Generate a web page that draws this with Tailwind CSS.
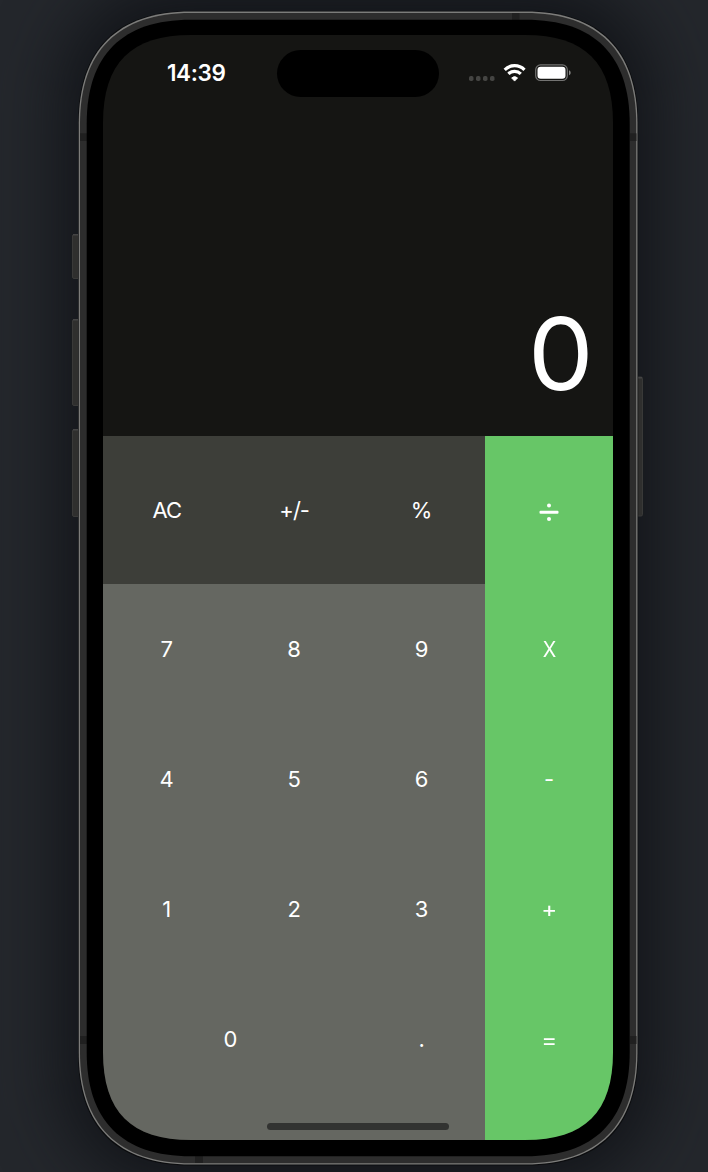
<!DOCTYPE html>
<html lang="en">
<head>
<meta charset="utf-8">
<title>Calculator</title>
<script src="https://cdn.jsdelivr.net/npm/@tailwindcss/browser@4"></script>
</head>
<body class="relative h-[1172px] w-[708px] overflow-hidden bg-[#24272c] font-['Inter',sans-serif] text-white">
  <!-- phone shadow -->
  <div class="absolute left-[62px] top-[-14px] h-[1200px] w-[592px] rounded-[110px] bg-[#101216]/90 blur-[34px]"></div>
  <!-- phone body -->
  <svg class="absolute inset-0" width="708" height="1172" viewBox="0 0 708 1172">
    <g fill="#2f2f2e" stroke="#393938" stroke-width="1">
      <rect x="72.5" y="234.5" width="10" height="44" rx="1.5"/>
      <rect x="72.5" y="319.5" width="10" height="86" rx="1.5"/>
      <rect x="72.5" y="429.5" width="10" height="87" rx="1.5"/>
      <rect x="634" y="377" width="8.5" height="139" rx="1.5"/>
    </g>
    <g fill="#444">
      <rect x="73" y="234" width="6" height="1.500"/><rect x="73" y="319" width="6" height="1.500"/>
      <rect x="73" y="429" width="6" height="1.500"/><rect x="637" y="377" width="5" height="1.500"/>
    </g>
    <path id="rim" fill="#0b0c0e"/>
    <path id="edge" fill="#7c7c7a"/>
    <path id="band" fill="#2d2d2d"/>
    <g fill="#202020">
      <rect x="512" y="13" width="7.500" height="7"/><rect x="195" y="1156" width="8" height="7"/>
      <rect x="80" y="133.300" width="7" height="7.700"/><rect x="630" y="133.300" width="6.500" height="7.700"/>
      <rect x="80" y="1036" width="7" height="8"/><rect x="630" y="1036" width="6.500" height="8"/>
    </g>
    <path id="bezel" fill="#000"/>
  </svg>
  <!-- screen -->
  <main id="screen" class="relative ml-[103px] mt-[35px] flex h-[1105px] w-[510px] flex-col bg-[#151513]">
    <header class="flex h-[77px] shrink-0 items-center pl-[64px] pr-[41px]">
      <time class="w-[110px] text-[22.5px] font-semibold leading-none tracking-[-0.4px]">14:39</time>
      <div class="-mt-px h-[47px] w-[162px] rounded-full bg-black"></div>
      <svg class="-mt-[3px] ml-auto" width="104" height="24" viewBox="0 0 104 24">
        <g fill="#454543"><rect x="1" y="16" width="4.500" height="5" rx="1.800"/><rect x="8" y="16" width="4.500" height="5" rx="1.800"/><rect x="15" y="16" width="4.500" height="5" rx="1.800"/><rect x="22" y="16" width="4.500" height="5" rx="1.800"/></g>
        <g fill="none" stroke="#fff" stroke-width="3.200">
          <path d="M36.700 9.800A14 14 0 0 1 56.500 9.800"/>
          <path d="M40.400 13.800A9 9 0 0 1 52.800 13.800"/>
        </g>
        <path d="M46.600 21.100L43.600 17.900A4.600 4.600 0 0 1 49.600 17.900Z" fill="#fff" stroke="#fff" stroke-width=".8" stroke-linejoin="round"/>
        <rect x="67.700" y="4.900" width="31.600" height="15.600" rx="4.800" fill="none" stroke="#737372" stroke-width="1.200"/>
        <rect x="69.500" y="6.700" width="28" height="12" rx="3.200" fill="#fff"/>
        <path d="M101 10.200c2.200.8 2.200 4.200 0 5z" fill="#858584"/>
      </svg>
    </header>
    <output class="flex h-[324px] shrink-0 items-end justify-end pb-[31px] pr-[20.5px] text-[101px] leading-[103px]"><span class="scale-x-[1.03]">0</span></output>
    <section class="flex grow text-[22px] leading-none">
      <div class="grid w-[382.300px] shrink-0 grid-cols-3 grid-rows-[147.500px_repeat(4,130.200px)_1fr] bg-[#656761]">
        <div class="col-span-3 grid grid-cols-3 place-items-center bg-[#3d3e39] pt-px"><span class="tracking-[-1px]">AC</span><span class="tracking-[-1px]">+/-</span><span>%</span></div>
        <span class="place-self-center">7</span><span class="place-self-center">8</span><span class="place-self-center">9</span>
        <span class="place-self-center pt-px">4</span><span class="place-self-center pt-px">5</span><span class="place-self-center pt-px">6</span>
        <span class="place-self-center pt-px">1</span><span class="place-self-center pt-px">2</span><span class="place-self-center pt-px">3</span>
        <span class="col-span-2 place-self-center">0</span><span class="place-self-center">.</span>
      </div>
      <div class="grid grow grid-rows-[147.500px_repeat(4,130.200px)_1fr] justify-items-center bg-[#67c667]">
        <svg class="mt-[66px]" width="20" height="20" viewBox="0 0 20 20" fill="#fff"><rect x=".5" y="8.800" width="19" height="3" rx="1"/><circle cx="10" cy="3.500" r="2"/><circle cx="10" cy="17" r="2"/></svg>
        <span class="scale-x-90 self-center">X</span><span class="self-center pt-px">-</span><span class="scale-x-110 self-center">+</span><span class="scale-x-110 self-center pt-px">=</span>
      </div>
    </section>
    <div class="absolute bottom-[10px] left-[164px] h-[7px] w-[182px] rounded-full bg-[#323331]"></div>
  </main>
  <script>
    // Rounded rectangle whose corners ease into the sides: e is the corner's extent, c its handle offset.
    function smoothRect(x, y, w, h, e, c) {
      const X = x + w, Y = y + h;
      return `M${x + e} ${y}H${X - e}C${X - c} ${y} ${X} ${y + c} ${X} ${y + e}V${Y - e}C${X} ${Y - c} ${X - c} ${Y} ${X - e} ${Y}` +
        `H${x + e}C${x + c} ${Y} ${x} ${Y - c} ${x} ${Y - e}V${y + e}C${x} ${y + c} ${x + c} ${y} ${x + e} ${y}Z`;
    }
    const outline = (id, ...box) => document.getElementById(id).setAttribute('d', smoothRect(...box));
    outline('rim', 78, 11, 560.200, 1154.400, 112, 38.500);
    outline('edge', 78.700, 11.600, 558.800, 1153, 112, 38.700);
    outline('band', 80, 12.900, 556.200, 1150.400, 111, 38.200);
    outline('bezel', 86.700, 19.700, 543, 1136.500, 104, 35.400);
    document.getElementById('screen').style.clipPath = `path('${smoothRect(0, 0, 510, 1105, 88, 28)}')`;
  </script>
</body>
</html>
